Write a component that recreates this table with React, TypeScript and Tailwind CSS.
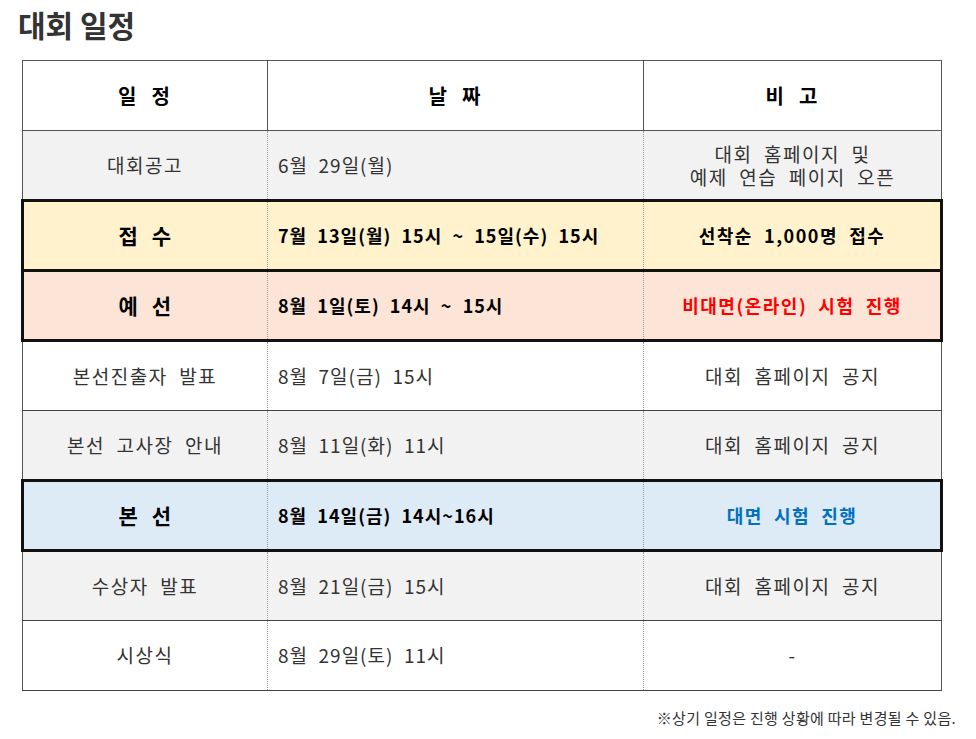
import React from "react";

type Row = {
  name: string;
  date: string;
  note: React.ReactNode;
  bg: string;
  strong?: boolean;
  noteColor?: string;
};

const rows: Row[] = [
  {
    name: "대회공고",
    date: "6월  29일(월)",
    note: (
      <span className="block leading-[23px]">
        {"대회  홈페이지  및"}
        <br />
        {"예제  연습  페이지  오픈"}
      </span>
    ),
    bg: "bg-[#f2f2f2]",
  },
  {
    name: "접  수",
    date: "7월  13일(월)  15시  ~  15일(수)  15시",
    note: "선착순  1,000명  접수",
    bg: "bg-[#fff2cc]",
    strong: true,
    noteColor: "text-black",
  },
  {
    name: "예  선",
    date: "8월  1일(토)  14시  ~  15시",
    note: "비대면(온라인)  시험  진행",
    bg: "bg-[#fce4d6]",
    strong: true,
    noteColor: "text-[#ff0000]",
  },
  { name: "본선진출자  발표", date: "8월  7일(금)  15시", note: "대회  홈페이지  공지", bg: "bg-white" },
  { name: "본선  고사장  안내", date: "8월  11일(화)  11시", note: "대회  홈페이지  공지", bg: "bg-[#f2f2f2]" },
  {
    name: "본  선",
    date: "8월  14일(금)  14시~16시",
    note: "대면  시험  진행",
    bg: "bg-[#ddebf7]",
    strong: true,
    noteColor: "text-[#0070c0]",
  },
  { name: "수상자  발표", date: "8월  21일(금)  15시", note: "대회  홈페이지  공지", bg: "bg-[#f2f2f2]" },
  { name: "시상식", date: "8월  29일(토)  11시", note: "-", bg: "bg-white" },
];

export default function App() {
  return (
    <div className="min-h-screen bg-white text-[#333] font-['Noto_Sans_CJK_KR','Noto_Sans',sans-serif]">
      <h1 className="pl-[18px] pt-[2px] text-[30px] font-bold leading-[44px] tracking-[0px] text-[#333]">
        대회 일정
      </h1>
      <table className="ml-[21px] mt-[14px] w-[919px] table-fixed border-collapse">
        <colgroup>
          <col className="w-[245px]" />
          <col className="w-[376px]" />
          <col className="w-[298px]" />
        </colgroup>
        <thead>
          <tr className="h-[70px] bg-white">
            {["일  정", "날  짜", "비  고"].map((h) => (
              <th key={h} className="border border-[#555] text-[20px] font-bold text-black">
                <span className="whitespace-pre tracking-[2px]">{h}</span>
              </th>
            ))}
          </tr>
        </thead>
        <tbody>
          {rows.map((r, i) => {
            const edge = r.strong
              ? "border-y-[3px] border-y-[#111]"
              : "border-y border-y-[#444]";
            return (
              <tr key={i} className={`h-[70px] ${r.bg}`}>
                <td
                  className={`${edge} ${
                    r.strong
                      ? "border-l-[3px] border-l-[#111] text-[21px] font-bold text-black"
                      : "border-l border-l-[#555] text-[19px]"
                  } border-r border-r-[#999] [border-right-style:dotted] text-center`}
                >
                  <span className="whitespace-pre tracking-[1.5px]">{r.name}</span>
                </td>
                <td
                  className={`${edge} border-x border-x-[#999] [border-left-style:dotted] [border-right-style:dotted] ${
                    r.strong ? "text-[18px] font-bold text-black" : "text-[19px]"
                  } pl-[10px] text-left`}
                >
                  <span className="whitespace-pre tracking-[1px]">{r.date}</span>
                </td>
                <td
                  className={`${edge} ${
                    r.strong
                      ? "border-r-[3px] border-r-[#111] font-bold text-[18px]"
                      : "border-r border-r-[#555] text-[19px]"
                  } border-l border-l-[#999] [border-left-style:dotted] text-center ${r.noteColor ?? ""}`}
                >
                  <span className="whitespace-pre tracking-[1.5px]">{r.note}</span>
                </td>
              </tr>
            );
          })}
        </tbody>
      </table>
      <p className="mt-[16px] pr-[20px] text-right text-[15px] tracking-[0.3px] text-[#333]">
        ※상기 일정은 진행 상황에 따라 변경될 수 있음.
      </p>
    </div>
  );
}
